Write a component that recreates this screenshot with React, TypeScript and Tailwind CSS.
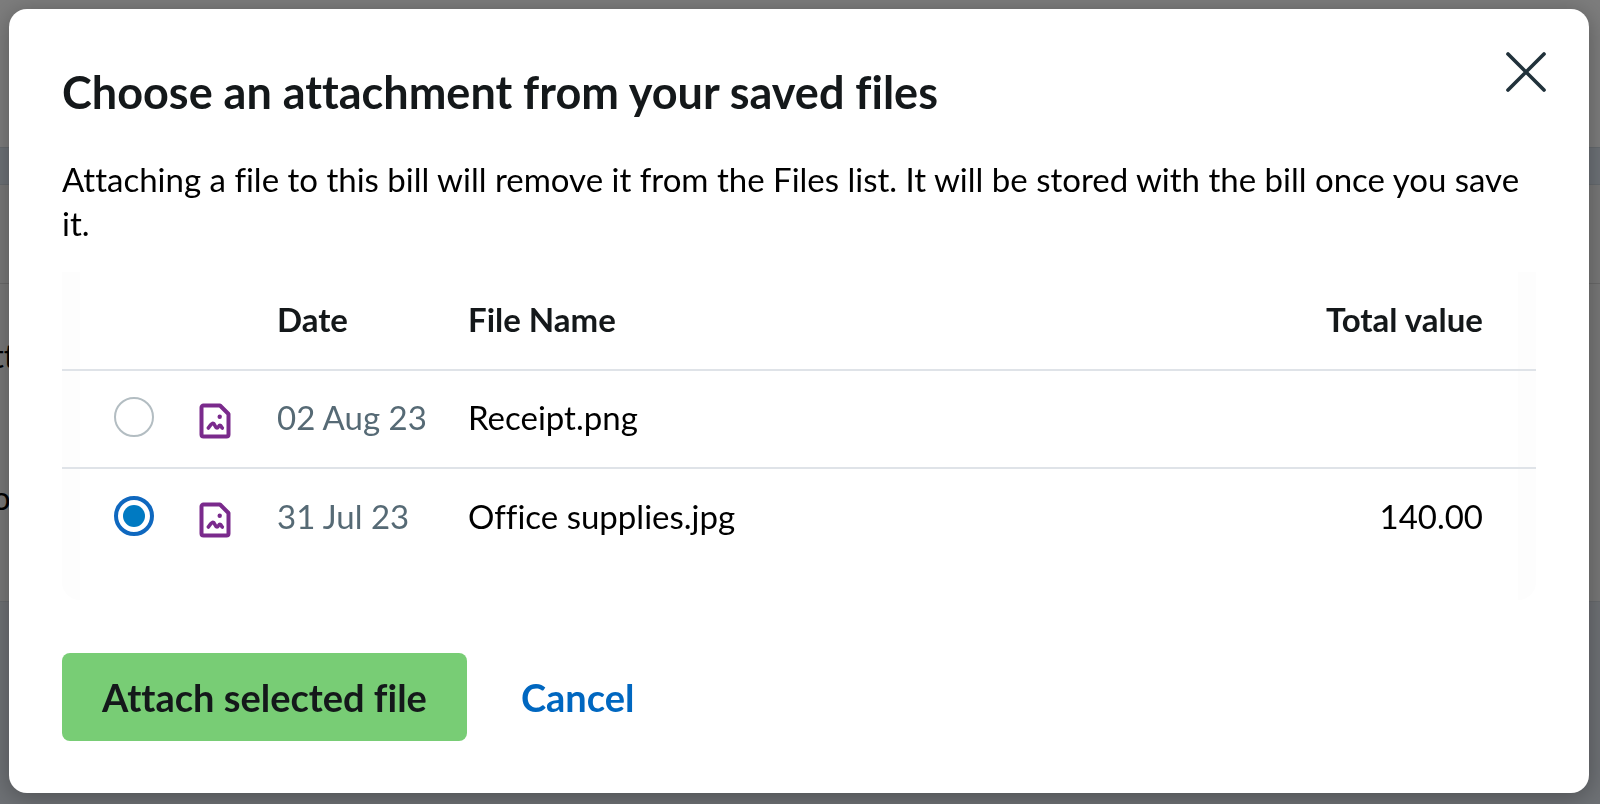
import { useState } from "react";

type SavedFile = { id: string; date: string; name: string; total: string };

const files: SavedFile[] = [
  { id: "receipt", date: "02 Aug 23", name: "Receipt.png", total: "" },
  { id: "supplies", date: "31 Jul 23", name: "Office supplies.jpg", total: "140.00" },
];

function ImageFileIcon() {
  return (
    <svg viewBox="0 0 32 36" className="block h-9 w-8" fill="none" aria-hidden="true">
      <path
        d="M4 2.500H21L29.500 11V31.500a2 2 0 0 1-2 2H4.500a2 2 0 0 1-2-2V4.500a2 2 0 0 1 2-2Z"
        stroke="#7a2a8c"
        strokeWidth="4"
        strokeLinejoin="round"
      />
      <circle cx="20.700" cy="13.800" r="2.200" fill="#7a2a8c" />
      <path
        d="M9.300 25C11 23 12.500 20.400 14 20.400C16 20.400 16 25 18 25C19.500 25 19.500 22.400 21 22.400C22.500 22.400 22.500 24.500 23.300 25"
        stroke="#7a2a8c"
        strokeWidth="3.600"
        strokeLinecap="round"
        strokeLinejoin="round"
      />
    </svg>
  );
}

function CloseIcon() {
  return (
    <svg viewBox="0 0 40 40" className="block size-10" fill="none" aria-hidden="true">
      <path d="M2 2L38 38M38 2L2 38" stroke="#21323b" strokeWidth="3.700" strokeLinecap="round" />
    </svg>
  );
}

function PageBehind() {
  return (
    <div aria-hidden="true" className="flex min-h-screen flex-col bg-[#787878] text-[33px] leading-10 text-black">
      <div className="h-[147px] bg-[#7d7d7d]" />
      <div className="h-[38px] border-y border-[#666b6f] bg-[#6d7277]" />
      <div className="h-[99px] border-b border-[#6a6a6a]" />
      <div className="flex h-[317px] flex-col gap-[102px] pt-[51px]">
        <span className="-ml-2">tt</span>
        <span className="-ml-2">o</span>
      </div>
      <div className="grow border-t border-[#686b6e] bg-[#6e7175]" />
    </div>
  );
}

export default function App() {
  const [selected, setSelected] = useState("supplies");

  return (
    <div className="font-['Lato',sans-serif] text-[#14181a] [font-variant-ligatures:none]">
      <PageBehind />
      <div className="fixed inset-0 overflow-auto pt-[9px] pr-[11px] pb-[10px] pl-[9px]">
        <section
          role="dialog"
          aria-modal="true"
          aria-labelledby="dialog-title"
          className="rounded-[18px] bg-white px-[53px] pb-[52px] shadow-[0_4px_24px_rgba(0,0,0,0.3)]"
        >
          <header className="flex items-start justify-between pt-[43px]">
            <h1 id="dialog-title" className="pt-3 text-[45px] leading-[56px] font-bold">
              Choose an attachment from your saved files
            </h1>
            <button type="button" aria-label="Close" className="-mr-[10px]">
              <CloseIcon />
            </button>
          </header>

          <p className="mt-[37px] text-[33px] leading-11 text-black">
            Attaching a file to this bill will remove it from the Files list. It will be stored with the bill once
            you save it.
          </p>

          <div className="mt-[27px] rounded-b-[18px] border-x-[18px] border-[#fdfdfd] pb-[34px]">
            <table className="-mx-[18px] w-[calc(100%+36px)] table-fixed border-collapse text-[33px] leading-10">
              <colgroup>
                <col className="w-[137px]" />
                <col className="w-[78px]" />
                <col className="w-[191px]" />
                <col />
                <col className="w-[260px]" />
              </colgroup>
              <thead>
                <tr className="h-[98px] border-b-2 border-[#dfe3e8]">
                  <td />
                  <td />
                  <th scope="col" className="pb-1 text-left font-bold">Date</th>
                  <th scope="col" className="pb-1 text-left font-bold">File Name</th>
                  <th scope="col" className="pr-[53px] pb-1 text-right font-bold">Total value</th>
                </tr>
              </thead>
              <tbody>
                {files.map((file) => (
                  <tr key={file.id} className="h-[98px] border-b-2 border-[#dfe3e8] last:border-b-0">
                    <td className="pb-1 pl-[52px]">
                      <input
                        type="radio"
                        name="saved-file"
                        id={file.id}
                        checked={selected === file.id}
                        onChange={() => setSelected(file.id)}
                        className="grid size-10 appearance-none place-content-center rounded-full border-2 border-[#b3bdc2] bg-white before:size-[22px] before:rounded-full checked:border-4 checked:border-[#0f68bf] checked:before:bg-[#007ac2]"
                      />
                    </td>
                    <td className="pt-1">
                      <ImageFileIcon />
                    </td>
                    <td className="pb-1 whitespace-nowrap text-[#566a75]">{file.date}</td>
                    <td className="pb-1 text-black">
                      <label htmlFor={file.id}>{file.name}</label>
                    </td>
                    <td className="pr-[53px] pb-1 text-right text-black">{file.total}</td>
                  </tr>
                ))}
              </tbody>
            </table>
          </div>

          <footer className="mt-[53px] flex items-center gap-[54px]">
            <button type="button" className="h-22 rounded-lg bg-[#78cd75] px-10 text-[38px] leading-11 font-bold">
              Attach selected file
            </button>
            <button type="button" className="text-[38px] leading-11 font-bold text-[#0067c0]">
              Cancel
            </button>
          </footer>
        </section>
      </div>
    </div>
  );
}
